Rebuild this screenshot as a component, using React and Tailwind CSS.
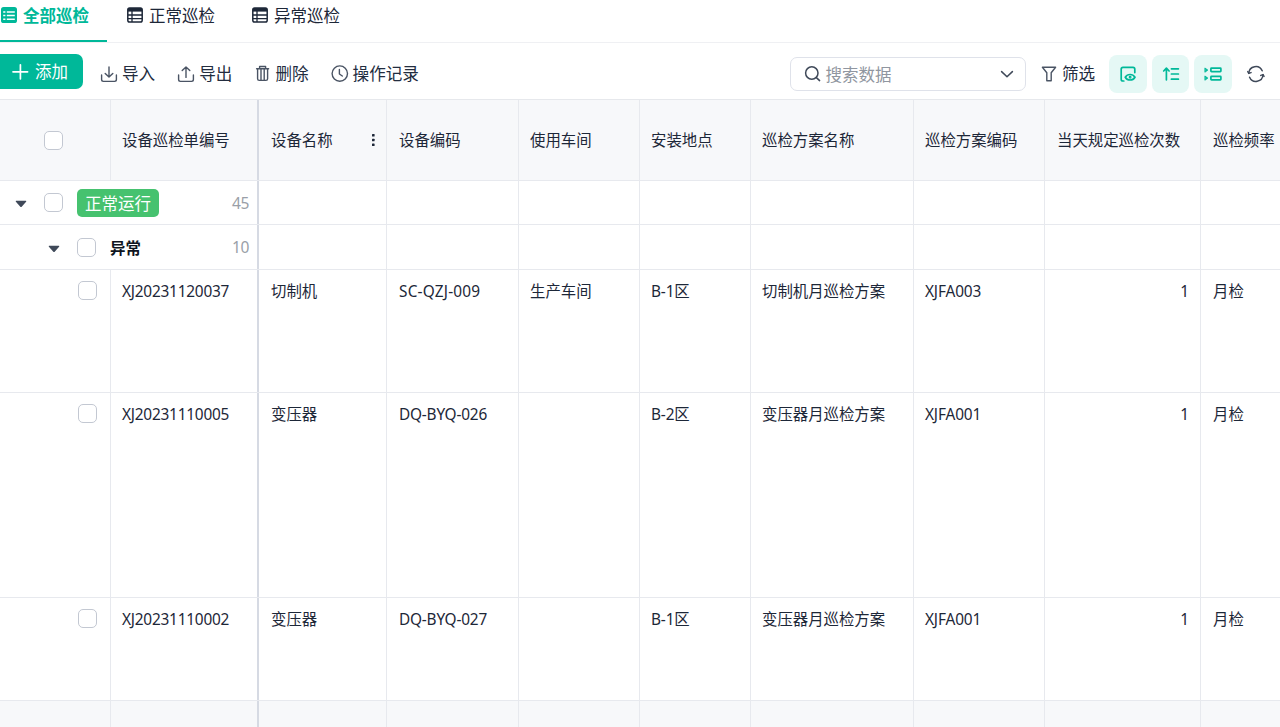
import React from 'react';
import { clsx } from 'clsx';

const columns = [
  { key: 'name', title: '设备名称', width: 'w-[128px]', pad: 'pl-[12px]', menu: true },
  { key: 'code', title: '设备编码', width: 'w-[132px]', pad: 'pl-[12px]' },
  { key: 'workshop', title: '使用车间', width: 'w-[121px]', pad: 'pl-[11px]' },
  { key: 'place', title: '安装地点', width: 'w-[111px]', pad: 'pl-[11px]' },
  { key: 'plan', title: '巡检方案名称', width: 'w-[163px]', pad: 'pl-[11px]' },
  { key: 'planCode', title: '巡检方案编码', width: 'w-[131px]', pad: 'pl-[11px]' },
  { key: 'times', title: '当天规定巡检次数', width: 'w-[156px]', pad: 'pl-[12px]', right: true },
  { key: 'cycle', title: '巡检频率', width: 'w-[140px]', pad: 'pl-[12px]' },
];

const rows = [
  {
    id: 'XJ20231120037',
    height: 'h-[123px]',
    codeSpacing: 'tracking-[0.2px]',
    name: '切制机',
    code: 'SC-QZJ-009',
    workshop: '生产车间',
    place: 'B-1区',
    plan: '切制机月巡检方案',
    planCode: 'XJFA003',
    times: '1',
    cycle: '月检',
  },
  {
    id: 'XJ20231110005',
    height: 'h-[205px]',
    codeSpacing: 'tracking-[-0.2px]',
    name: '变压器',
    code: 'DQ-BYQ-026',
    workshop: '',
    place: 'B-2区',
    plan: '变压器月巡检方案',
    planCode: 'XJFA001',
    times: '1',
    cycle: '月检',
  },
  {
    id: 'XJ20231110002',
    height: 'h-[103px]',
    codeSpacing: 'tracking-[-0.2px]',
    name: '变压器',
    code: 'DQ-BYQ-027',
    workshop: '',
    place: 'B-1区',
    plan: '变压器月巡检方案',
    planCode: 'XJFA001',
    times: '1',
    cycle: '月检',
  },
];

function TableIcon() {
  return (
    <svg width="16" height="16" viewBox="0 0 16 16" className="shrink-0">
      <rect x="0.8" y="0.9" width="14.4" height="14.2" rx="1.8" fill="none" stroke="currentColor" strokeWidth="1.5" />
      <path d="M1 1h14v3.6H1z" fill="currentColor" />
      <path d="M1 8h14M1 11.6h14M5 4v11" stroke="currentColor" strokeWidth="1.3" />
    </svg>
  );
}

function ActiveTableIcon() {
  return (
    <svg width="16" height="16" viewBox="0 0 16 16" className="shrink-0">
      <rect width="16" height="16" rx="2.6" fill="currentColor" />
      <path d="M2.2 5h2.2M5.8 5h8M2.2 8.6h2.2M5.8 8.6h8M2.2 12.2h2.2M5.8 12.2h8" stroke="#fff" strokeWidth="1.5" />
    </svg>
  );
}

function Icon({ size = 18, width = 1.4, className, children }) {
  return (
    <svg
      width={size}
      height={size}
      viewBox="0 0 18 18"
      fill="none"
      stroke="currentColor"
      strokeWidth={width}
      strokeLinecap="round"
      strokeLinejoin="round"
      className={clsx('shrink-0', className)}
    >
      {children}
    </svg>
  );
}

function Checkbox({ className }) {
  return (
    <span className={clsx('block size-[19px] shrink-0 rounded-[5px] border border-[#c3c8d2] bg-white', className)} />
  );
}

function Caret({ className }) {
  return (
    <svg width="12" height="8" viewBox="0 0 12 8" className={clsx('shrink-0', className)}>
      <path d="M1.2 0.8h9.6q.9.2.3 1L6.7 6.7q-.7.7-1.4 0L.9 1.8q-.6-.8.3-1z" fill="#3f4959" />
    </svg>
  );
}

function Tab({ label, active, className }) {
  return (
    <div
      className={clsx(
        'flex h-full items-start gap-[6px] border-b-2 pt-[2px]',
        active ? 'border-[#00b899] font-bold text-[#00b899]' : 'border-transparent',
        className
      )}
    >
      <span className="mt-[4.5px]">{active ? <ActiveTableIcon /> : <TableIcon />}</span>
      <span className="text-[16.5px] leading-[27px]">{label}</span>
    </div>
  );
}

function Action({ label, className, children }) {
  return (
    <div className={clsx('flex shrink-0 items-center gap-[4px]', className)}>
      {children}
      <span className="text-[16.6px] leading-[26px]">{label}</span>
    </div>
  );
}

function Toolbar() {
  return (
    <div className="flex h-[57px] shrink-0 border-b border-[#e6e8ec] text-[#3f4959]">
      <button className="-ml-2 mt-[11px] flex h-[35px] w-[91px] items-center gap-[6px] rounded-[7px] bg-[#00b899] pl-[19px] text-white">
        <Icon width={1.7}>
          <path d="M9.4 1.8v14M2 8.8h14.6" />
        </Icon>
        <span className="text-[16.5px] leading-[26px]">添加</span>
      </button>

      <div className="mt-[18px] flex h-[26px] items-center text-[#232d3f]">
        <Action label="导入" className="ml-[17px]">
          <Icon className="text-[#4a5464]">
            <path d="M1.6 10v4.6q0 1.8 1.8 1.8h11.2q1.8 0 1.8-1.8V10M9 2v9.9M5.2 8.4L9 12.1l3.8-3.7" />
          </Icon>
        </Action>
        <Action label="导出" className="ml-[22px]">
          <Icon className="text-[#4a5464]">
            <path d="M1.6 10v4.6q0 1.8 1.8 1.8h11.2q1.8 0 1.8-1.8V10M9 12.4V2M5.2 5.6L9 1.9l3.8 3.7" />
          </Icon>
        </Action>
        <Action label="删除" className="ml-[21px]">
          <Icon className="text-[#4a5464]">
            <path d="M3.6 3.8h12M6.6 3.6V1.5h6v2.1M4.6 4v9.8q0 1.6 1.6 1.6H13q1.6 0 1.6-1.6V4M8 4v11M11.2 4v11" />
          </Icon>
        </Action>
        <Action label="操作记录" className="ml-[22px]">
          <Icon className="text-[#4a5464]">
            <circle cx="8.8" cy="8.6" r="7.7" />
            <path d="M8.4 4.4v4.6l2.9 2" />
          </Icon>
        </Action>
      </div>

      <div className="ml-auto mt-[12px] flex h-[38px] items-center">
        <div className="flex h-[34px] w-[236.5px] items-center rounded-[7px] border border-[#dfe2ea] pl-[13px] pr-[9px]">
          <Icon width={1.5}>
            <circle cx="7.8" cy="8" r="6.2" />
            <path d="M12.4 12.6l3.2 3" />
          </Icon>
          <span className="ml-[4px] mt-px text-[16.5px] leading-[26px] text-[#9096a0]">搜索数据</span>
          <Icon className="ml-auto" width={1.5}>
            <path d="M3.6 6.6L9 11.8l5.4-5.2" />
          </Icon>
        </div>
        <Action label="筛选" className="ml-[14px] text-[#232d3f]">
          <Icon className="text-[#4a5464]">
            <path d="M2.4 2.3h13.2l-4.4 5.4v8H6.8v-8z" />
          </Icon>
        </Action>
        <div className="ml-[14px] flex gap-[5px] text-[#00b899]">
          <span className="flex h-[38px] w-[37.6px] items-center justify-center rounded-lg bg-[#e5f8f5]">
            <Icon width={1.7}>
              <path d="M4.8 16H4q-1.8 0-1.8-1.8V4.2q0-1.8 1.8-1.8h10q1.8 0 1.8 1.8v3.4" />
              <path d="M6.2 12.2q1.8-2.7 4.9-2.7t4.9 2.7q-1.8 2.8-4.9 2.8t-4.9-2.8z" />
              <circle cx="11.1" cy="12.2" r="0.6" />
            </Icon>
          </span>
          <span className="flex h-[38px] w-[37.6px] items-center justify-center rounded-lg bg-[#e5f8f5]">
            <Icon width={1.7}>
              <path d="M4.4 14.8V3.3M1.7 6l2.7-2.8L7.1 6M9.4 3.8h7M9.4 9h7M9.4 14.2h7" />
            </Icon>
          </span>
          <span className="flex h-[38px] w-[37.6px] items-center justify-center rounded-lg bg-[#e5f8f5]">
            <Icon width={1.7}>
              <rect x="6.9" y="3.1" width="10" height="3.6" rx="0.6" />
              <rect x="6.9" y="11.3" width="10" height="3.6" rx="0.6" />
              <path d="M1.2 3.2l2.6 1.9L1.2 7zM1.2 11.2l2.6 1.9-2.6 1.9z" fill="currentColor" strokeWidth="0.9" />
            </Icon>
          </span>
        </div>
        <Icon className="ml-[15px] mr-[15px]" width={1.5}>
          <path d="M1.8 8.2A7 7 0 0 1 15.2 5.8M16 9.8A7 7 0 0 1 2.6 12.2" />
          <path d="M.8 6.6l1 1.8 2.2-.8M17 11.4l-1-1.8-2.2.8" />
        </Icon>
      </div>
    </div>
  );
}

function HeaderRow() {
  return (
    <div className="flex h-[81px] w-max items-stretch border-b border-[#e7e9ee] bg-[#f7f8fa] text-[15.4px]">
      <div className="flex w-[111px] items-center border-r border-[#e7e9ee] pl-[44px]">
        <Checkbox />
      </div>
      <div className="flex w-[148px] items-center border-r-2 border-[#d6dae3] pl-[11px] pt-px">设备巡检单编号</div>
      {columns.map((col) => (
        <div
          key={col.key}
          className={clsx('flex items-center justify-between border-r border-[#e7e9ee] pt-px', col.pad, col.width)}
        >
          {col.title}
          {col.menu && (
            <svg width="4" height="14" viewBox="0 0 4 14" className="mb-[2px] mr-[11px]" fill="#1d2738">
              <rect x="1" y="1" width="2.6" height="2.6" rx="0.6" />
              <rect x="1" y="5.7" width="2.6" height="2.6" rx="0.6" />
              <rect x="1" y="10.4" width="2.6" height="2.6" rx="0.6" />
            </svg>
          )}
        </div>
      ))}
    </div>
  );
}

function GroupRow({ nested, count, children }) {
  return (
    <div
      className={clsx('flex w-max items-stretch border-b border-[#e7e9ee]', nested ? 'h-[45px]' : 'h-[44px]')}
    >
      <div
        className={clsx(
          'flex w-[259px] items-center border-r-2 border-[#d6dae3] pr-[8px]',
          nested ? 'pl-[48px]' : 'pl-[15px]'
        )}
      >
        <Caret className="mt-[3px]" />
        <Checkbox className="ml-[17px]" />
        {children}
        <span className="ml-auto mt-[2px] text-[15.6px] tracking-[-0.4px] text-[#9a9fa8]">{count}</span>
      </div>
      {columns.map((col) => (
        <div key={col.key} className={clsx('border-r border-[#e7e9ee]', col.width)} />
      ))}
    </div>
  );
}

function DataRow({ row }) {
  return (
    <div className={clsx('flex w-max items-stretch border-b border-[#e7e9ee] text-[15.4px] leading-[24px]', row.height)}>
      <div className="w-[111px] border-r border-[#e7e9ee] pl-[78px] pt-[11px]">
        <Checkbox />
      </div>
      <div className="w-[148px] border-r-2 border-[#d6dae3] pl-[11px] pt-[10px] tracking-[-0.22px]">{row.id}</div>
      {columns.map((col) => (
        <div
          key={col.key}
          className={clsx(
            'border-r border-[#e7e9ee] pt-[10px]',
            col.pad,
            col.right && 'pr-[11px] text-right',
            col.key === 'code' && row.codeSpacing,
            col.key === 'planCode' && 'tracking-[-0.15px]',
            col.key === 'place' && 'tracking-[-0.15px]',
            col.width
          )}
        >
          {row[col.key]}
        </div>
      ))}
    </div>
  );
}

function App() {
  return (
    <div className="flex h-[727px] w-[1280px] flex-col overflow-hidden bg-white font-['Noto_Sans','Noto_Sans_CJK_SC',sans-serif] text-[#1d2738]">
      <div className="flex h-[43px] shrink-0 border-b border-[#eff0f3]">
        <Tab label="全部巡检" active className="w-[107px] pl-px" />
        <Tab label="正常巡检" className="ml-[20px]" />
        <Tab label="异常巡检" className="ml-[37px]" />
      </div>

      <Toolbar />

      <div className="grow">
        <HeaderRow />
        <GroupRow count={45}>
          <span className="ml-[14px] mt-px h-[28px] rounded-[5px] bg-[#46c26f] px-[8px] text-[16.5px] leading-[29px] text-white">
            正常运行
          </span>
        </GroupRow>
        <GroupRow nested count={10}>
          <span className="ml-[14px] mt-[3px] text-[15.4px] font-bold text-[#0e1420]">异常</span>
        </GroupRow>
        {rows.map((row) => (
          <DataRow key={row.id} row={row} />
        ))}
        <div className="flex h-[26px] w-max bg-[#f7f8fa]">
          <div className="w-[111px] border-r border-[#e7e9ee]" />
          <div className="w-[148px] border-r-2 border-[#d6dae3]" />
          {columns.map((col) => (
            <div key={col.key} className={clsx('border-r border-[#e7e9ee]', col.width)} />
          ))}
        </div>
      </div>
    </div>
  );
}

export default App;
